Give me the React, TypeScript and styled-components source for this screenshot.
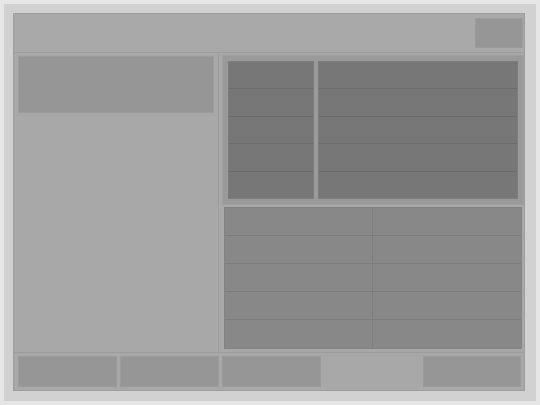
import React from "react";
import styled, { createGlobalStyle } from "styled-components";

const GlobalStyle = createGlobalStyle`
  html, body {
    margin: 0;
    padding: 0;
    background: #e6e6e6;
    font-family: "Liberation Sans", Arial, sans-serif;
  }
  * {
    box-sizing: border-box;
  }
`;

const Shell = styled.div`
  margin: 4px;
  width: 532px;
  height: 397px;
  background: #d1d1d1;
  padding: 9px 11px 10px 9px;
`;

const Frame = styled.div`
  width: 512px;
  height: 378px;
  border: 1px solid #9e9e9e;
  background: #a8a8a8;
  display: flex;
  flex-direction: column;
`;

const Header = styled.div`
  height: 39px;
  flex-shrink: 0;
  border-bottom: 1px solid #9d9d9d;
  background: #a9a9a9;
  display: flex;
  align-items: center;
  justify-content: flex-end;
  padding: 0 1px 0 0;
`;

const HeaderButton = styled.div`
  width: 48px;
  height: 30px;
  background: #969696;
  border: 1px solid #9b9b9b;
`;

const Body = styled.div`
  flex: 1;
  display: flex;
  min-height: 0;
`;

const Sidebar = styled.div`
  width: 205px;
  flex-shrink: 0;
  border-right: 1px solid #9d9d9d;
  padding: 3px 4px 0 4px;
`;

const SidebarBox = styled.div`
  height: 57px;
  background: #969696;
  border: 1px solid #9c9c9c;
`;

const Main = styled.div`
  flex: 1;
  display: flex;
  flex-direction: column;
  padding: 2px 1px 3px 3px;
  gap: 2px;
`;

const TopPanel = styled.div`
  height: 150px;
  border: 1px solid #a0a0a0;
  background: #9a9a9a;
  padding: 5px;
  display: flex;
  gap: 4px;
`;

const DarkColumn = styled.div<{ $width: number }>`
  width: ${(p) => p.$width}px;
  display: flex;
  flex-direction: column;
  background: #777777;
  border: 1px solid #7c7c7c;
`;

const DarkRow = styled.div`
  flex: 1;
  border-bottom: 1px solid #6b6b6b;
  &:last-child {
    border-bottom: none;
  }
`;

const Table = styled.div`
  flex: 1;
  margin: 0 2px 0 2px;
  display: grid;
  grid-template-columns: 1fr 1fr;
  grid-template-rows: repeat(5, 1fr);
  background: #888888;
  border: 1px solid #828282;
`;

const Cell = styled.div<{ $last: boolean; $left: boolean }>`
  border-bottom: ${(p) => (p.$last ? "none" : "1px solid #7b7b7b")};
  border-right: ${(p) => (p.$left ? "1px solid #7e7e7e" : "none")};
`;

const Footer = styled.div`
  height: 38px;
  flex-shrink: 0;
  border-top: 1px solid #9d9d9d;
  display: grid;
  grid-template-columns: 99px 99px 99px 1fr 98px;
  gap: 3px;
  padding: 3px 3px 3px 4px;
`;

const FooterButton = styled.div<{ $empty?: boolean }>`
  background: ${(p) => (p.$empty ? "transparent" : "#969696")};
  border: 1px solid ${(p) => (p.$empty ? "transparent" : "#9b9b9b")};
`;

const rows = [0, 1, 2, 3, 4];

export default function App() {
  return (
    <>
      <GlobalStyle />
      <Shell>
        <Frame>
          <Header>
            <HeaderButton />
          </Header>
          <Body>
            <Sidebar>
              <SidebarBox />
            </Sidebar>
            <Main>
              <TopPanel>
                <DarkColumn $width={86}>
                  {rows.map((r) => (
                    <DarkRow key={r} />
                  ))}
                </DarkColumn>
                <DarkColumn $width={200}>
                  {rows.map((r) => (
                    <DarkRow key={r} />
                  ))}
                </DarkColumn>
              </TopPanel>
              <Table>
                {rows.map((r) =>
                  [0, 1].map((c) => (
                    <Cell key={`${r}-${c}`} $last={r === 4} $left={c === 0} />
                  ))
                )}
              </Table>
            </Main>
          </Body>
          <Footer>
            <FooterButton />
            <FooterButton />
            <FooterButton />
            <FooterButton $empty />
            <FooterButton />
          </Footer>
        </Frame>
      </Shell>
    </>
  );
}
